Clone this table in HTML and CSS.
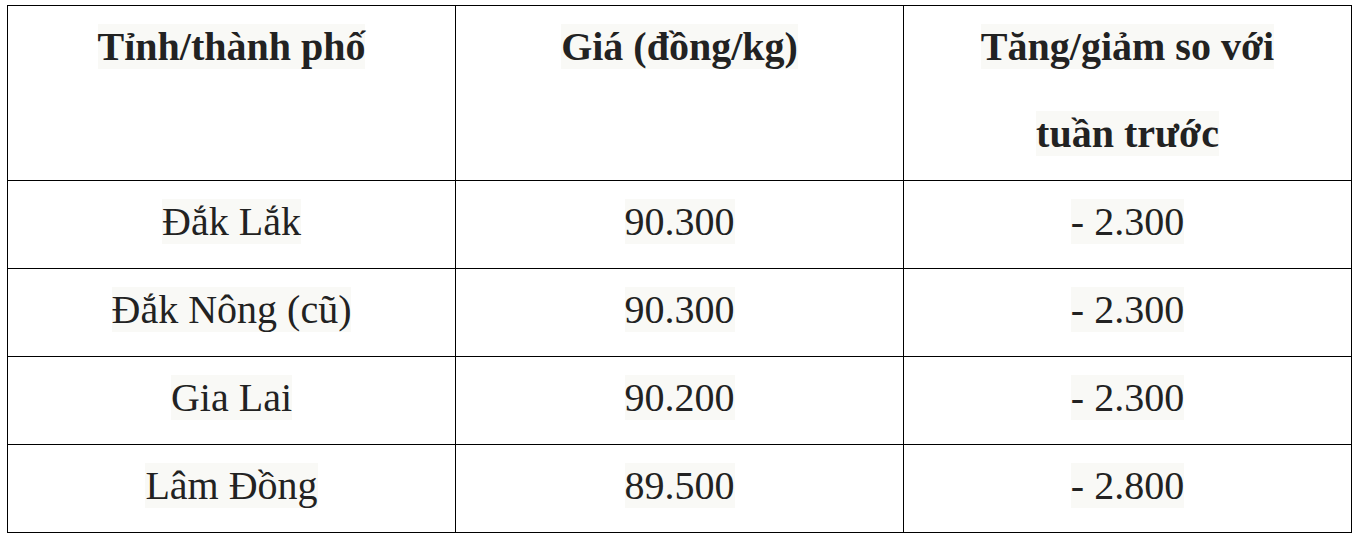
FILE: index.html
```html
<!DOCTYPE html>
<html lang="vi">
<head>
<meta charset="utf-8">
<title>Giá cà phê</title>
<link rel="stylesheet" href="styles.css">
</head>
<body>
<table class="price-table">
  <thead>
    <tr>
      <th><span class="line"><span class="hl">Tỉnh/thành phố</span></span></th>
      <th><span class="line"><span class="hl">Giá (đồng/kg)</span></span></th>
      <th><span class="line"><span class="hl">Tăng/giảm so với</span></span><span class="line"><span class="hl">tuần trước</span></span></th>
    </tr>
  </thead>
  <tbody>
    <tr>
      <td><span class="hl">Đắk Lắk</span></td>
      <td><span class="hl">90.300</span></td>
      <td><span class="hl">- 2.300</span></td>
    </tr>
    <tr>
      <td><span class="hl">Đắk Nông (cũ)</span></td>
      <td><span class="hl">90.300</span></td>
      <td><span class="hl">- 2.300</span></td>
    </tr>
    <tr>
      <td><span class="hl">Gia Lai</span></td>
      <td><span class="hl">90.200</span></td>
      <td><span class="hl">- 2.300</span></td>
    </tr>
    <tr>
      <td><span class="hl">Lâm Đồng</span></td>
      <td><span class="hl">89.500</span></td>
      <td><span class="hl">- 2.800</span></td>
    </tr>
  </tbody>
</table>
</body>
</html>
```
FILE: styles.css
```css
html, body {
  margin: 0;
  background: #ffffff;
}

body {
  padding: 5px 0 0 7px;
  font-family: "Liberation Serif", "Times New Roman", serif;
  color: #222222;
}

.price-table {
  border-collapse: collapse;
  table-layout: fixed;
  width: 1345px;
}

.price-table th,
.price-table td {
  border: 1px solid #000000;
  text-align: center;
  vertical-align: top;
  font-size: 40px;
  line-height: 57px;
  width: 33.333%;
}

.price-table th {
  font-weight: bold;
  padding: 11.5px 4px 18.5px;
  height: 144px;
  box-sizing: content-box;
}

.price-table td {
  font-weight: normal;
  padding: 12px 4px 18px;
  height: 57px;
  box-sizing: content-box;
}

.line {
  display: block;
}

.line + .line {
  margin-top: 30px;
}

.hl {
  background: #f9f9f6;
}
```
